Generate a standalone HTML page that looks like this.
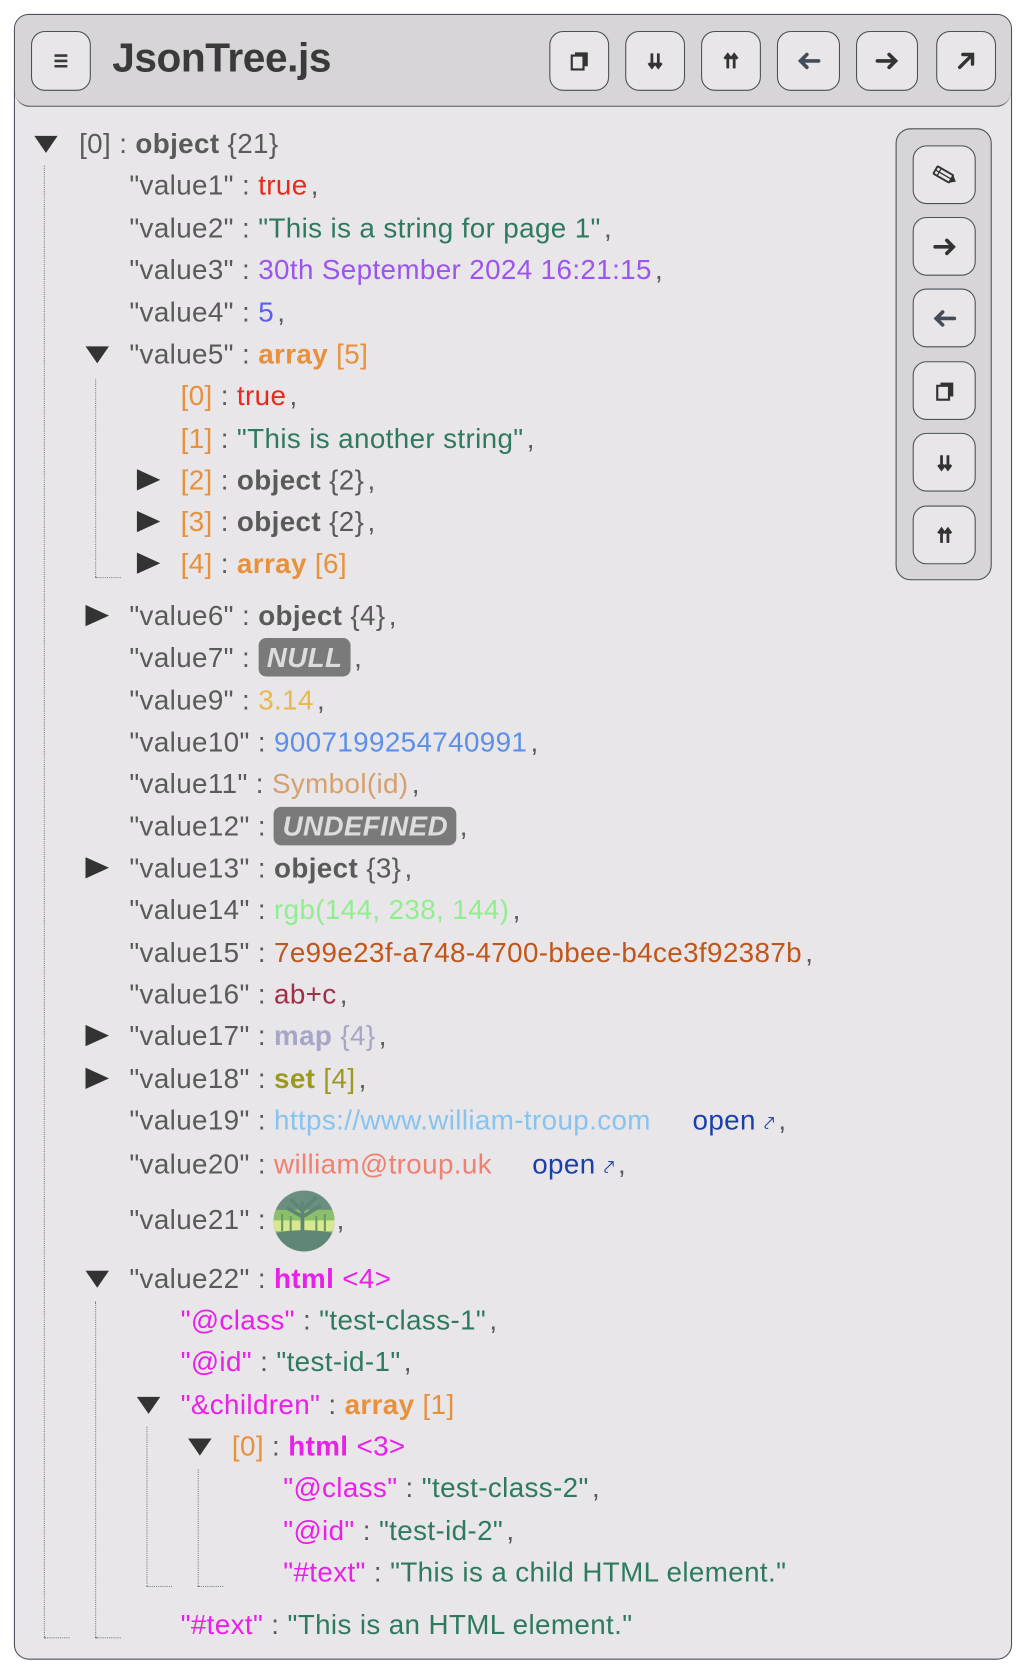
<!DOCTYPE html>
<html><head><meta charset="utf-8"><style>
html,body{margin:0;padding:0;background:#fff;width:1027px;height:1675px;overflow:hidden}
#w{position:absolute;left:0;top:0;width:961px;height:1568px;transform:scale(1.0687);transform-origin:0 0;font-family:"Liberation Sans",sans-serif}
.c{position:absolute;left:13px;top:13px;width:932px;height:1538px;border:1px solid #4a4f58;border-radius:14px;background:#e8e6e8;overflow:hidden}
.h{position:absolute;left:0;top:0;width:932px;height:85px;background:#d7d5d7;border-bottom:1px solid #4a4f58;border-radius:0 0 14px 14px}
.b{position:absolute;width:54px;height:54px;border:1px solid #4a4f58;border-radius:13px;background:#e8e6e8;display:flex;align-items:center;justify-content:center}
.t{position:absolute;left:91px;top:20px;font-size:38px;font-weight:bold;color:#3a3a3a;letter-spacing:-0.4px}
.p{position:absolute;left:824px;top:106px;width:88px;height:421px;background:#d7d5d7;border:1px solid #4a4f58;border-radius:14px}
.p .b{left:15px;width:57px;height:53px}
.r{position:absolute;font-size:26px;line-height:28px;color:#5a5a5a;white-space:pre;letter-spacing:0.35px}
.cm{margin-left:3px}
.tri{position:absolute}
.tr{color:#e8291c}.s{color:#2e7a60}.d{color:#9b55ef}.n{color:#5e5ef0}
.a{color:#e8903a}.ab{color:#e8903a;font-weight:bold}.o{color:#5a5a5a;font-weight:bold}
.badge{background:#7a7a7a;color:#ddd;font-weight:bold;font-style:italic;border-radius:7px;padding:3px 8px;display:inline-block;line-height:30px;margin-top:-4px}
.f{color:#e8b84a}.bi{color:#5b8fe8}.sy{color:#d4a070}.rgb{color:#90ee90}.g{color:#c0561a}.re{color:#a0304a}
.m{color:#a6a6c6;font-weight:bold}.mc{color:#a6a6c6}.st{color:#9a9a20;font-weight:bold}.stc{color:#9a9a20}
.u{color:#87c3ef}.e{color:#f08070}.op{color:#1a3fa8}.hk{color:#e820e8}.hb{color:#e820e8;font-weight:bold}
.vl{position:absolute;border-left:1px dotted #7a8090}.hl{position:absolute;border-top:1px dotted #7a8090}
</style></head><body><div id="w">
<div class="c">
<div class="h">
<div class="b" style="left:15px;top:15px"><svg width="18" height="18" viewBox="0 0 18 18"><path d="M3 4h12M3 9h12M3 14h12" stroke="#3a3a3a" stroke-width="2.4"/></svg></div>
<div class="t">JsonTree.js</div>
<div class="b" style="left:500px;top:15px"><svg width="22" height="22" viewBox="0 0 22 22"><rect x="7" y="3" width="12" height="13" fill="#333"/><rect x="4" y="6" width="11" height="13" fill="#e8e6e8" stroke="#333" stroke-width="2"/></svg></div>
<div class="b" style="left:571px;top:15px"><svg width="22" height="22" viewBox="0 0 22 22"><path d="M8 4v13M14 4v13M5 13l3 4 3-4M11 13l3 4 3-4" stroke="#333" stroke-width="2.6" fill="none"/></svg></div>
<div class="b" style="left:642px;top:15px"><svg width="22" height="22" viewBox="0 0 22 22"><path d="M8 18V5M14 18V5M5 9l3-4 3 4M11 9l3-4 3 4" stroke="#333" stroke-width="2.6" fill="none"/></svg></div>
<div class="b" style="left:713px;top:15px;width:57px"><svg width="26" height="22" viewBox="0 0 26 22"><path d="M22 11H5M11 5l-6 6 6 6" stroke="#444c58" stroke-width="3.4" fill="none" stroke-linecap="round"/></svg></div>
<div class="b" style="left:787px;top:15px;width:56px"><svg width="26" height="22" viewBox="0 0 26 22"><path d="M4 11h17M15 5l6 6-6 6" stroke="#333" stroke-width="3.4" fill="none" stroke-linecap="round"/></svg></div>
<div class="b" style="left:862px;top:15px"><svg width="22" height="22" viewBox="0 0 22 22"><path d="M5 17L16 6M8 5h9v9" stroke="#333" stroke-width="3.2" fill="none" stroke-linecap="round"/></svg></div>
</div>
<div class="p">
<div class="b" style="top:15px"><svg width="26" height="22" viewBox="0 0 26 22"><g transform="rotate(30 13 11)"><rect x="3" y="7" width="17" height="8" rx="1" fill="none" stroke="#333" stroke-width="1.8"/><path d="M20 7l5 4-5 4" fill="#333"/><path d="M7 7v8M3 11h17" stroke="#333" stroke-width="1.2"/></g></svg></div>
<div class="b" style="top:82px"><svg width="26" height="22" viewBox="0 0 26 22"><path d="M4 11h17M15 5l6 6-6 6" stroke="#333" stroke-width="3.4" fill="none" stroke-linecap="round"/></svg></div>
<div class="b" style="top:149px"><svg width="26" height="22" viewBox="0 0 26 22"><path d="M22 11H5M11 5l-6 6 6 6" stroke="#444c58" stroke-width="3.4" fill="none" stroke-linecap="round"/></svg></div>
<div class="b" style="top:217px"><svg width="22" height="22" viewBox="0 0 22 22"><rect x="7" y="3" width="12" height="13" fill="#333"/><rect x="4" y="6" width="11" height="13" fill="#e8e6e8" stroke="#333" stroke-width="2"/></svg></div>
<div class="b" style="top:284px"><svg width="22" height="22" viewBox="0 0 22 22"><path d="M8 4v13M14 4v13M5 13l3 4 3-4M11 13l3 4 3-4" stroke="#333" stroke-width="2.6" fill="none"/></svg></div>
<div class="b" style="top:352px"><svg width="22" height="22" viewBox="0 0 22 22"><path d="M8 18V5M14 18V5M5 9l3-4 3 4M11 9l3-4 3 4" stroke="#333" stroke-width="2.6" fill="none"/></svg></div>
</div>
</div>
<div class="vl" style="left:41px;top:155px;height:1377px"></div><div class="hl" style="left:41px;top:1532px;width:24px"></div>
<div class="vl" style="left:89px;top:355px;height:185px"></div><div class="hl" style="left:89px;top:540px;width:24px"></div>
<div class="vl" style="left:89px;top:1218px;height:314px"></div><div class="hl" style="left:89px;top:1532px;width:24px"></div>
<div class="vl" style="left:137px;top:1335px;height:149px"></div><div class="hl" style="left:137px;top:1484px;width:24px"></div>
<div class="vl" style="left:185px;top:1375px;height:109px"></div><div class="hl" style="left:185px;top:1484px;width:24px"></div>

<svg class="tri" style="left:32px;top:127px" width="22" height="16"><polygon points="0,0 22,0 11,16" fill="#333"/></svg>
<div class="r" style="left:74px;top:120px">[0] : <span class="o">object</span> {21}</div>
<div class="r" style="left:121px;top:159px">"value1" : <span class="tr">true</span><span class="cm">,</span></div>
<div class="r" style="left:121px;top:199px">"value2" : <span class="s">"This is a string for page 1"</span><span class="cm">,</span></div>
<div class="r" style="left:121px;top:238px">"value3" : <span class="d">30th September 2024 16:21:15</span><span class="cm">,</span></div>
<div class="r" style="left:121px;top:278px">"value4" : <span class="n">5</span><span class="cm">,</span></div>
<svg class="tri" style="left:80px;top:324px" width="22" height="16"><polygon points="0,0 22,0 11,16" fill="#333"/></svg>
<div class="r" style="left:121px;top:317px">"value5" : <span class="ab">array</span> <span class="a">[5]</span></div>
<div class="r" style="left:169px;top:356px"><span class="a">[0]</span> : <span class="tr">true</span><span class="cm">,</span></div>
<div class="r" style="left:169px;top:396px"><span class="a">[1]</span> : <span class="s">"This is another string"</span><span class="cm">,</span></div>
<svg class="tri" style="left:128px;top:439px" width="22" height="20"><polygon points="0,0 22,10 0,20" fill="#333"/></svg>
<div class="r" style="left:169px;top:435px"><span class="a">[2]</span> : <span class="o">object</span> {2}<span class="cm">,</span></div>
<svg class="tri" style="left:128px;top:478px" width="22" height="20"><polygon points="0,0 22,10 0,20" fill="#333"/></svg>
<div class="r" style="left:169px;top:474px"><span class="a">[3]</span> : <span class="o">object</span> {2}<span class="cm">,</span></div>
<svg class="tri" style="left:128px;top:517px" width="22" height="20"><polygon points="0,0 22,10 0,20" fill="#333"/></svg>
<div class="r" style="left:169px;top:513px"><span class="a">[4]</span> : <span class="ab">array</span> <span class="a">[6]</span></div>
<svg class="tri" style="left:80px;top:566px" width="22" height="20"><polygon points="0,0 22,10 0,20" fill="#333"/></svg>
<div class="r" style="left:121px;top:562px">"value6" : <span class="o">object</span> {4}<span class="cm">,</span></div>
<div class="r" style="left:121px;top:601px">"value7" : <span class="badge">NULL</span><span class="cm">,</span></div>
<div class="r" style="left:121px;top:641px">"value9" : <span class="f">3.14</span><span class="cm">,</span></div>
<div class="r" style="left:121px;top:680px">"value10" : <span class="bi">9007199254740991</span><span class="cm">,</span></div>
<div class="r" style="left:121px;top:719px">"value11" : <span class="sy">Symbol(id)</span><span class="cm">,</span></div>
<div class="r" style="left:121px;top:759px">"value12" : <span class="badge">UNDEFINED</span><span class="cm">,</span></div>
<svg class="tri" style="left:80px;top:802px" width="22" height="20"><polygon points="0,0 22,10 0,20" fill="#333"/></svg>
<div class="r" style="left:121px;top:798px">"value13" : <span class="o">object</span> {3}<span class="cm">,</span></div>
<div class="r" style="left:121px;top:837px">"value14" : <span class="rgb">rgb(144, 238, 144)</span><span class="cm">,</span></div>
<div class="r" style="left:121px;top:877px">"value15" : <span class="g">7e99e23f-a748-4700-bbee-b4ce3f92387b</span><span class="cm">,</span></div>
<div class="r" style="left:121px;top:916px">"value16" : <span class="re">ab+c</span><span class="cm">,</span></div>
<svg class="tri" style="left:80px;top:959px" width="22" height="20"><polygon points="0,0 22,10 0,20" fill="#333"/></svg>
<div class="r" style="left:121px;top:955px">"value17" : <span class="m">map</span> <span class="mc">{4}</span><span class="cm">,</span></div>
<svg class="tri" style="left:80px;top:999px" width="22" height="20"><polygon points="0,0 22,10 0,20" fill="#333"/></svg>
<div class="r" style="left:121px;top:995px">"value18" : <span class="st">set</span> <span class="stc">[4]</span><span class="cm">,</span></div>
<div class="r" style="left:121px;top:1034px">"value19" : <span class="u">https://www.william-troup.com</span></div>
<div class="r" style="left:648px;top:1034px"><span class="op">open <span style="font-size:18px">⤤</span></span><span class="cm">,</span></div>
<div class="r" style="left:121px;top:1075px">"value20" : <span class="e">william@troup.uk</span></div>
<div class="r" style="left:498px;top:1075px"><span class="op">open <span style="font-size:18px">⤤</span></span><span class="cm">,</span></div>
<div class="r" style="left:121px;top:1127px">"value21" :</div>
<svg style="position:absolute;left:256px;top:1114px" width="57" height="57" viewBox="0 0 57 57"><defs><clipPath id="cp"><circle cx="28.5" cy="28.5" r="28.5"/></clipPath></defs><g clip-path="url(#cp)"><rect width="57" height="57" fill="#6a8f80"/><rect y="18" width="57" height="22" fill="#8cbf6a"/><rect y="28" width="57" height="10" fill="#d8e890"/><path d="M0 40 Q28 34 57 40 V57 H0Z" fill="#5f8575"/><path d="M27 10v30M28 20 L16 8 M28 18 L40 6 M28 25 L12 16 M28 24 L44 14" stroke="#5f8575" stroke-width="3.5"/><path d="M8 22v16M16 24v14M40 24v14M48 22v16" stroke="#6a9a60" stroke-width="2"/></g></svg>
<div class="r" style="left:315px;top:1127px">,</div>
<svg class="tri" style="left:80px;top:1189px" width="22" height="16"><polygon points="0,0 22,0 11,16" fill="#333"/></svg>
<div class="r" style="left:121px;top:1182px">"value22" : <span class="hb">html</span> <span class="hk">&lt;4&gt;</span></div>
<div class="r" style="left:169px;top:1221px"><span class="hk">"@class"</span> : <span class="s">"test-class-1"</span><span class="cm">,</span></div>
<div class="r" style="left:169px;top:1260px"><span class="hk">"@id"</span> : <span class="s">"test-id-1"</span><span class="cm">,</span></div>
<svg class="tri" style="left:128px;top:1307px" width="22" height="16"><polygon points="0,0 22,0 11,16" fill="#333"/></svg>
<div class="r" style="left:169px;top:1300px"><span class="hk">"&amp;children"</span> : <span class="ab">array</span> <span class="a">[1]</span></div>
<svg class="tri" style="left:176px;top:1346px" width="22" height="16"><polygon points="0,0 22,0 11,16" fill="#333"/></svg>
<div class="r" style="left:217px;top:1339px"><span class="a">[0]</span> : <span class="hb">html</span> <span class="hk">&lt;3&gt;</span></div>
<div class="r" style="left:265px;top:1378px"><span class="hk">"@class"</span> : <span class="s">"test-class-2"</span><span class="cm">,</span></div>
<div class="r" style="left:265px;top:1418px"><span class="hk">"@id"</span> : <span class="s">"test-id-2"</span><span class="cm">,</span></div>
<div class="r" style="left:265px;top:1457px"><span class="hk">"#text"</span> : <span class="s">"This is a child HTML element."</span></div>
<div class="r" style="left:169px;top:1506px"><span class="hk">"#text"</span> : <span class="s">"This is an HTML element."</span></div>
</div></body></html>
